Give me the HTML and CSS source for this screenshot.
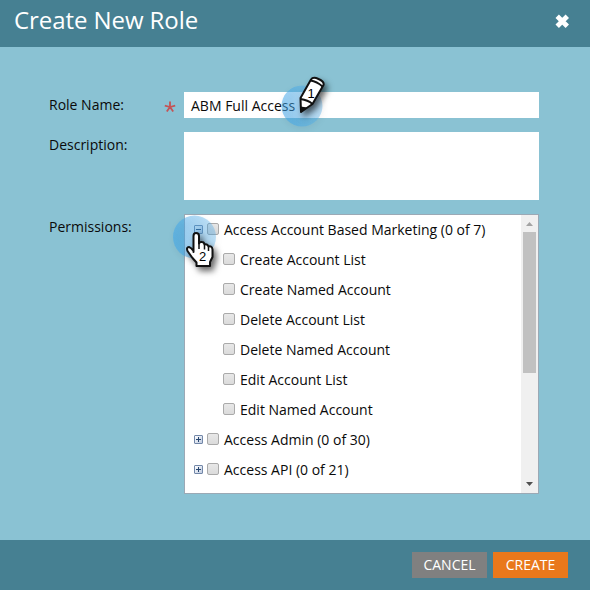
FILE: index.html
```html
<!DOCTYPE html>
<html lang="en">
<head>
<meta charset="utf-8">
<title>Create New Role</title>
<link rel="stylesheet" href="styles.css">
</head>
<body>
<div class="dialog">
  <header class="header">
    <h1 class="title">Create New Role</h1>
    <svg class="close" width="16" height="16" viewBox="0 0 16 16"><path d="M3.200 3.200 13.300 13.300M13.300 3.200 3.200 13.300"/></svg>
  </header>
  <main class="form">
    <div class="field name-field">
      <label class="label">Role Name:</label>
      <svg class="required" width="12" height="12" viewBox="0 0 12 12"><path d="M6 6V.6M6 6 .8 4.6M6 6 11.2 4.6M6 6 2.8 10.6M6 6 9.2 10.6"/></svg>
      <div class="input">ABM Full Access</div>
      <svg class="marker pencil-marker" width="60" height="64" viewBox="0 0 60 64">
        <defs>
          <linearGradient id="halo-fill" x1="0" y1=".6" x2="1" y2=".4">
            <stop offset="0" stop-color="#3ca5eb" stop-opacity=".55"/>
            <stop offset="1" stop-color="#4cabea" stop-opacity=".35"/>
          </linearGradient>
        </defs>
        <circle class="halo" cx="22" cy="38" r="20.500"/>
        <g class="pencil">
          <path class="ink-body" d="M20.500 30 31 11.500Q33 8.500 38.500 11Q44.500 13.500 43.500 17L32.500 36 21 44Z"/>
          <path class="line" d="M30.500 12.500Q37 13.500 42.500 18.500M20.500 31Q28 32 32.500 36"/>
          <path class="tip" d="M20.500 38.500 27.500 39.500 21 44.500Z"/>
        </g>
        <text class="digit" x="31" y="30">1</text>
      </svg>
    </div>
    <div class="field description-field">
      <label class="label">Description:</label>
      <div class="input textarea"></div>
    </div>
    <div class="field">
      <label class="label">Permissions:</label>
      <div class="tree">
        <div class="rows">
          <div class="row"><i class="toggle open"></i><i class="check"></i><span>Access Account Based Marketing (0 of 7)</span></div>
          <div class="row child"><i class="check"></i><span>Create Account List</span></div>
          <div class="row child"><i class="check"></i><span>Create Named Account</span></div>
          <div class="row child"><i class="check"></i><span>Delete Account List</span></div>
          <div class="row child"><i class="check"></i><span>Delete Named Account</span></div>
          <div class="row child"><i class="check"></i><span>Edit Account List</span></div>
          <div class="row child"><i class="check"></i><span>Edit Named Account</span></div>
          <div class="row"><i class="toggle"></i><i class="check"></i><span>Access Admin (0 of 30)</span></div>
          <div class="row"><i class="toggle"></i><i class="check"></i><span>Access API (0 of 21)</span></div>
        </div>
        <div class="scrollbar">
          <svg class="arrow up" width="17" height="17" viewBox="0 0 17 17"><path d="M5 11 8.500 7 12 11Z"/></svg>
          <div class="thumb"></div>
          <svg class="arrow down" width="17" height="17" viewBox="0 0 17 17"><path d="M5 6H12L8.500 10Z"/></svg>
        </div>
      </div>
      <svg class="marker hand-marker" width="60" height="68" viewBox="0 0 60 68">
        <circle class="halo" cx="25.500" cy="28" r="21.500"/>
        <path class="hand" d="M24.500 43V27Q24.500 24 27 24Q30 24 30 27V34.500Q30.500 32.500 33 33Q35 33 35.500 35.500Q38.500 34.500 39.500 37.500Q43 36.500 43.500 40.500V48L41 53V57H27.500V53.500L23.500 49 18.500 42Q17 38 20 38Q22 38.500 24.500 42Z"/>
        <path class="line fingers" d="M30 34V40M35.500 35.500V40.500M39.500 37.500V42"/>
        <text class="digit" x="33.500" y="52">2</text>
      </svg>
    </div>
  </main>
  <footer class="footer">
    <button class="button cancel">CANCEL</button>
    <button class="button create">CREATE</button>
  </footer>
</div>
</body>
</html>
```
FILE: styles.css
```css
* { box-sizing: border-box; }
body { margin: 0; font: 14px/20px "Open Sans", sans-serif; color: #0a0a0a; }
.dialog { width: 590px; height: 590px; display: flex; flex-direction: column; background: #8ac2d3; overflow: hidden; }
.header { height: 47px; flex: none; display: flex; justify-content: space-between; padding: 3px 20px 0 14px; background: #468092; }
.title { margin: 0; font-size: 24px; line-height: 33px; font-weight: 400; letter-spacing: -.07px; color: #fff; }
.close { margin-top: 10px; fill: none; stroke: #fff; stroke-width: 4.8; }
.form { flex: 1; padding: 45px 51px 0 49px; }
.field { position: relative; display: flex; align-items: flex-start; }
.name-field { margin-bottom: 14px; }
.description-field { margin-bottom: 14px; }
.label { width: 135px; padding-top: 3px; flex: none; }
.required { margin: 9px 8px 0 -20px; fill: none; stroke: #c45355; stroke-width: 1.8; }
.input { width: 355px; height: 26px; padding: 4px 7px; flex: none; background: #fff; }
.textarea { height: 68px; }
.tree { width: 355px; height: 280px; flex: none; display: flex; justify-content: space-between; border: 1px solid #9ba9b5; background: #fff; }
.rows { padding-left: 9px; }
.row { height: 30px; display: flex; align-items: center; white-space: nowrap; }
.child { padding-left: 29px; }
.toggle { width: 9px; height: 9px; margin: 0 4px 1px 0; border: 1px solid #7287a8; border-radius: 1px; background: linear-gradient(#26456f, #26456f) center / 5px 1px no-repeat, linear-gradient(#26456f, #26456f) center / 1px 5px no-repeat, linear-gradient(135deg, #fff, #bfcbe0); }
.open { background: linear-gradient(#26456f, #26456f) center / 5px 1px no-repeat, linear-gradient(135deg, #fff, #bfcbe0); }
.check { width: 12px; height: 12px; margin: 0 5px 2px 0; border: 1px solid #aaa; border-radius: 2px; background: linear-gradient(#e8e8e8, #dbdbdb); }
.scrollbar { width: 17px; display: flex; flex-direction: column; background: #f0f0f0; }
.arrow { flex: none; }
.up { fill: #a3a3a3; }
.down { margin-top: auto; fill: #505050; }
.thumb { width: 13px; height: 141px; margin: 0 2px; background: #c1c1c1; }
.marker { position: absolute; pointer-events: none; overflow: visible; }
.pencil-marker { left: 231px; top: -24px; }
.hand-marker { left: 120px; top: -5px; }
.halo { fill: url(#halo-fill); filter: drop-shadow(1px 2px 3px rgba(0, 0, 0, .12)); }
.pencil, .hand { filter: drop-shadow(3px 4px 3px rgba(0, 0, 0, .6)); }
.ink-body, .hand { fill: #fff; stroke: #111; stroke-width: 2; stroke-linejoin: round; }
.line { fill: none; stroke: #111; stroke-width: 1.8; }
.tip { fill: #111; }
.fingers { stroke-width: 1.5; }
.digit { font: 13px "Liberation Sans", sans-serif; text-anchor: middle; fill: #000; }
.footer { height: 50px; flex: none; display: flex; gap: 6px; justify-content: flex-end; padding: 12px 22px 0 0; background: #468092; }
.button { width: 75px; height: 26px; padding: 0; border: 0; font: 14px/26px "Open Sans", sans-serif; color: #fff; }
.cancel { background: #808080; }
.create { background: #e9781b; }
```
